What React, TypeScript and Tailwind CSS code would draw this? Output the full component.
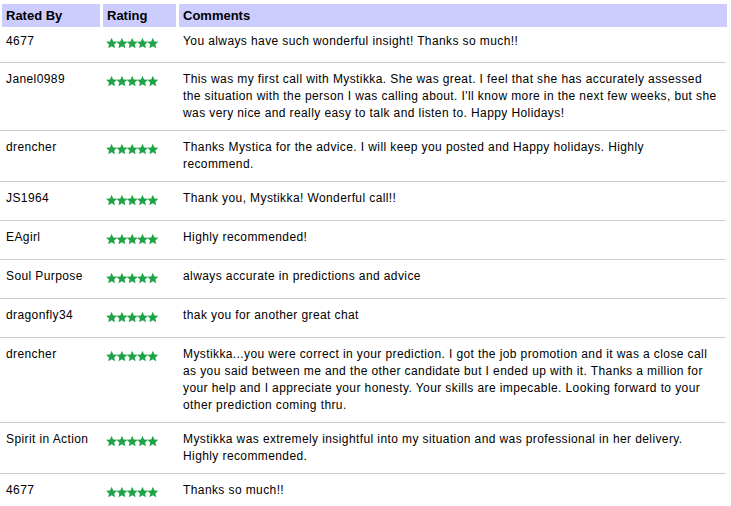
import { memo } from "react";

type Review = {
    user: string;
    lines: string[];
};

const reviews: Review[] = [
    { user: "4677", lines: ["You always have such wonderful insight! Thanks so much!!"] },
    {
        user: "Janel0989",
        lines: [
            "This was my first call with Mystikka. She was great. I feel that she has accurately assessed",
            "the situation with the person I was calling about. I'll know more in the next few weeks, but she",
            "was very nice and really easy to talk and listen to. Happy Holidays!",
        ],
    },
    {
        user: "drencher",
        lines: [
            "Thanks Mystica for the advice. I will keep you posted and Happy holidays. Highly",
            "recommend.",
        ],
    },
    { user: "JS1964", lines: ["Thank you, Mystikka! Wonderful call!!"] },
    { user: "EAgirl", lines: ["Highly recommended!"] },
    { user: "Soul Purpose", lines: ["always accurate in predictions and advice"] },
    { user: "dragonfly34", lines: ["thak you for another great chat"] },
    {
        user: "drencher",
        lines: [
            "Mystikka...you were correct in your prediction. I got the job promotion and it was a close call",
            "as you said between me and the other candidate but I ended up with it. Thanks a million for",
            "your help and I appreciate your honesty. Your skills are impecable. Looking forward to your",
            "other prediction coming thru.",
        ],
    },
    {
        user: "Spirit in Action",
        lines: [
            "Mystikka was extremely insightful into my situation and was professional in her delivery.",
            "Highly recommended.",
        ],
    },
    { user: "4677", lines: ["Thanks so much!!"] },
];

const Stars = () => {
    const star = (cx: number) => {
        const pts: string[] = [];
        for (let i = 0; i < 10; i++) {
            const r = i % 2 === 0 ? 5.8 : 2.7;
            const a = (Math.PI / 5) * i - Math.PI / 2;
            pts.push(`${(cx + r * Math.cos(a)).toFixed(2)},${(5.6 + r * Math.sin(a)).toFixed(2)}`);
        }
        return pts.join(" ");
    };

    return (
        <svg width="53" height="11" viewBox="0 0 53 11" className="block">
            {[5.6, 15.9, 26.2, 36.5, 46.8].map((cx) => (
                <polygon key={cx} points={star(cx)} fill="#1fa347" />
            ))}
        </svg>
    );
};

const ReviewRow = memo(({ review, first }: { review: Review; first: boolean }) => {
    return (
        <div
            className={
                first
                    ? "w-[726px] h-[35px] pt-[6px]"
                    : "w-[726px] min-h-[39px] pt-[8px] pb-[8px] border-t border-[#cdcdcd]"
            }
        >
            <div className="grid grid-cols-[98px_73px_548px] gap-x-[3px] pl-[2px]">
                <div className="pl-[4px] leading-[17px] whitespace-nowrap">{review.user}</div>
                <div className="pl-[3px] h-[17px] flex items-center">
                    <div className="mt-[3px]">
                        <Stars />
                    </div>
                </div>
                <div className="pl-[4px] leading-[17px]">
                    {review.lines.map((line, index) => (
                        <div key={index} className="whitespace-nowrap">
                            {line}
                        </div>
                    ))}
                </div>
            </div>
        </div>
    );
});

export default function App() {
    return (
        <div
            className="w-[731px] h-[506px] overflow-hidden bg-white pt-[4px] text-[12px] tracking-[0.4px] text-black"
            style={{ fontFamily: '"Liberation Sans", Arial, sans-serif' }}
        >
            <div className="grid grid-cols-[98px_73px_548px] gap-x-[3px] ml-[2px] h-[23px] text-[13px] font-bold tracking-normal text-black">
                <div className="bg-[#ccccff] pl-[4px] flex items-center">Rated By</div>
                <div className="bg-[#ccccff] pl-[4px] flex items-center">Rating</div>
                <div className="bg-[#ccccff] pl-[4px] flex items-center">Comments</div>
            </div>

            {reviews.map((review, index) => (
                <ReviewRow key={index} review={review} first={index === 0} />
            ))}
        </div>
    );
}
